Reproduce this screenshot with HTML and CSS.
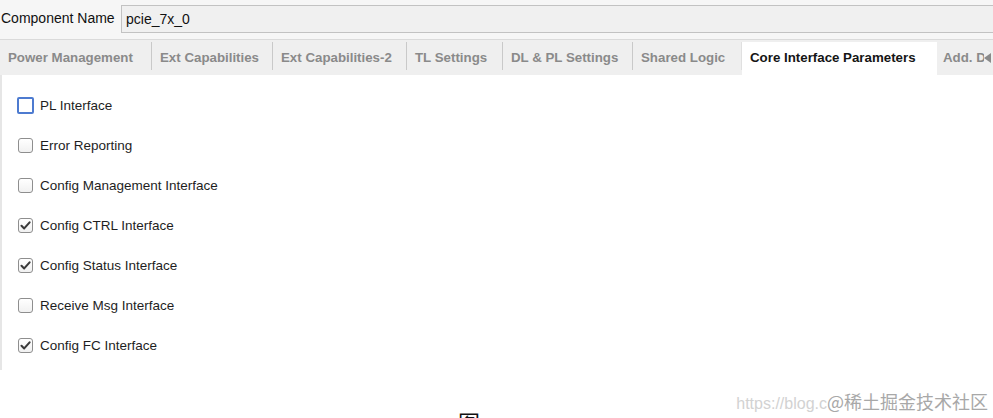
FILE: index.html
```html
<!DOCTYPE html>
<html>
<head>
<meta charset="utf-8">
<link rel="stylesheet" href="styles.css">
</head>
<body>
<div class="header">
  <span class="label">Component Name</span>
  <div class="field">pcie_7x_0</div>
</div>
<div class="tabs">
  <div class="tab t1">Power Management</div>
  <div class="tab t2">Ext Capabilities</div>
  <div class="tab t3">Ext Capabilities-2</div>
  <div class="tab t4">TL Settings</div>
  <div class="tab t5">DL &amp; PL Settings</div>
  <div class="tab t6">Shared Logic</div>
  <div class="tab active">Core Interface Parameters</div>
  <div class="tab more">Add. D</div>
  <div class="scroll"><svg width="8" height="10" viewBox="0 0 8 10"><path d="M7 0 L0 5 L7 10 Z" fill="#8a8a8a"/></svg></div>
</div>
<div class="panel">
  <div class="row"><span class="cb focus"></span><span class="txt">PL Interface</span></div>
  <div class="row"><span class="cb"></span><span class="txt">Error Reporting</span></div>
  <div class="row"><span class="cb"></span><span class="txt">Config Management Interface</span></div>
  <div class="row"><span class="cb"><svg width="13" height="13" viewBox="0 0 13 13"><path d="M2.5 6.8 L5.2 9.4 L10.6 3.4" fill="none" stroke="#3a3a3a" stroke-width="2.1" stroke-linecap="round" stroke-linejoin="round"/></svg></span><span class="txt">Config CTRL Interface</span></div>
  <div class="row"><span class="cb"><svg width="13" height="13" viewBox="0 0 13 13"><path d="M2.5 6.8 L5.2 9.4 L10.6 3.4" fill="none" stroke="#3a3a3a" stroke-width="2.1" stroke-linecap="round" stroke-linejoin="round"/></svg></span><span class="txt">Config Status Interface</span></div>
  <div class="row"><span class="cb"></span><span class="txt">Receive Msg Interface</span></div>
  <div class="row"><span class="cb"><svg width="13" height="13" viewBox="0 0 13 13"><path d="M2.5 6.8 L5.2 9.4 L10.6 3.4" fill="none" stroke="#3a3a3a" stroke-width="2.1" stroke-linecap="round" stroke-linejoin="round"/></svg></span><span class="txt">Config FC Interface</span></div>
</div>
<div class="footer">
  <div class="watermark"><span class="wm-url">https://blog.c</span><span class="wm-name">@稀土掘金技术社区</span></div>
  <div class="caption">图</div>
</div>
</body>
</html>
```
FILE: styles.css
```css
* { box-sizing: border-box; }
html, body { margin: 0; padding: 0; }
body {
  width: 993px;
  height: 418px;
  overflow: hidden;
  background: #ffffff;
  font-family: "Liberation Sans", Arial, sans-serif;
}
.header {
  display: flex;
  align-items: flex-start;
  height: 40px;
  padding-top: 5px;
  padding-left: 1px;
  background: #f6f6f6;
  border-bottom: 1px solid #dadada;
}
.label {
  font-size: 14px;
  color: #111;
  line-height: 27px;
  width: 120px;
  white-space: nowrap;
}
.field {
  flex: 1;
  height: 28px;
  border: 1px solid #c2c2c2;
  border-right: none;
  background: #f0f0f0;
  font-size: 14px;
  line-height: 26px;
  padding-left: 4px;
  color: #111;
}
.tabs {
  display: flex;
  align-items: flex-start;
  height: 35px;
  padding-top: 2px;
  background: #efefef;
  overflow: hidden;
}
.tab {
  font-size: 13.3px;
  font-weight: bold;
  color: #8a8a8a;
  height: 28px;
  line-height: 24px;
  padding: 4px 0 0 8px;
  border-right: 1px solid #c9c9c9;
  white-space: nowrap;
  overflow: hidden;
  flex-shrink: 0;
}
.t1 { width: 152px; }
.t2 { width: 121px; }
.t3 { width: 134px; }
.t4 { width: 96px; }
.t5 { width: 130px; }
.t6 { width: 109px; border-right-color: #e0e0e0; }
.tab.active {
  width: 195px;
  height: 33px;
  background: #ffffff;
  color: #151515;
  border-right: none;
}
.tab.more {
  flex: 1 1 auto;
  min-width: 0;
  border-right: none;
  padding-left: 6px;
}
.scroll {
  width: 9px;
  height: 28px;
  padding-top: 3px;
  display: flex;
  align-items: center;
  flex-shrink: 0;
}
.panel {
  height: 295px;
  padding-top: 10px;
  padding-left: 16px;
  border-left: 2px solid #e6e6e6;
  background: #ffffff;
}
.row {
  display: flex;
  align-items: center;
  height: 40px;
  gap: 7px;
}
.cb {
  width: 15px;
  height: 15px;
  border: 1px solid #8e8e8e;
  border-radius: 3px;
  background: linear-gradient(#ffffff, #f1f1f1);
  display: flex;
  align-items: center;
  justify-content: center;
  flex-shrink: 0;
}
.cb.focus {
  width: 17px;
  height: 17px;
  border: 2px solid #4d7bd0;
  border-radius: 2px;
  margin: 0 -1px 0 -1px;
  background: #ffffff;
}
.txt {
  font-size: 13.5px;
  color: #1e1e1e;
  white-space: nowrap;
}
.footer {
  height: 48px;
  padding-top: 21px;
}
.watermark {
  text-align: right;
  padding-right: 5px;
  line-height: 20px;
  height: 20px;
  white-space: nowrap;
  font-family: "Liberation Sans", "Noto Sans CJK SC", sans-serif;
}
.wm-url {
  font-size: 16px;
  color: #d2d2d2;
}
.wm-name {
  font-size: 18px;
  color: #a8a8a8;
  font-family: "Noto Sans CJK SC", sans-serif;
}
.caption {
  padding-left: 458px;
  font-size: 22px;
  line-height: 22px;
  margin-top: -1px;
  color: #111;
  font-family: "Noto Sans CJK SC", sans-serif;
}
```
